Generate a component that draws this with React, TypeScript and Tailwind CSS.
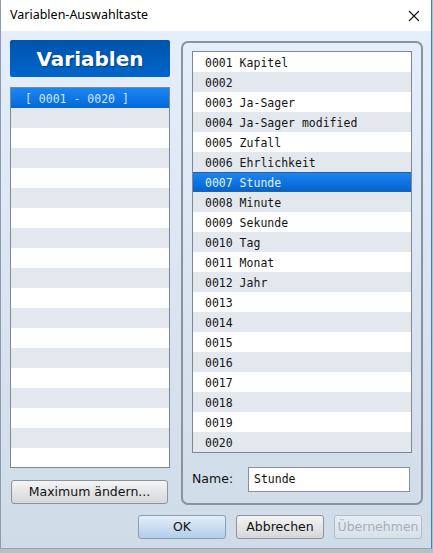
import React from 'react';

const vars = [
  'Kapitel',
  '',
  'Ja-Sager',
  'Ja-Sager modified',
  'Zufall',
  'Ehrlichkeit',
  'Stunde',
  'Minute',
  'Sekunde',
  'Tag',
  'Monat',
  'Jahr',
  '',
  '',
  '',
  '',
  '',
  '',
  '',
  '',
];

const mono = { fontFamily: '"DejaVu Sans Mono", monospace' };
const ui = { fontFamily: '"DejaVu Sans", sans-serif' };

function Row({ i, selected, children }: { i: number; selected?: boolean; children?: React.ReactNode }) {
  if (selected) {
    return (
      <div className="h-[20px] flex items-center pt-[4px] pl-[12px] text-[11.5px] text-[#e6f0ff] bg-gradient-to-b from-[#1c84ee] to-[#0264d4] border-y border-[#2e5f95]">
        {children}
      </div>
    );
  }
  return (
    <div
      className={
        'h-[20px] flex items-center pt-[4px] pl-[12px] text-[11.5px] text-[#141414] ' +
        (i % 2 === 1 ? 'bg-[#e3e8ee]' : 'bg-white')
      }
    >
      {children}
    </div>
  );
}

function Button({ children, primary, disabled, className }: any) {
  const look = disabled
    ? 'border-[#b4bcc4] text-[#a7afb8] bg-gradient-to-b from-[#e4ecf4] to-[#d8e0e8]'
    : primary
    ? 'border-[#8a9eb4] text-[#111] bg-gradient-to-b from-[#e3eef9] to-[#b3cde8]'
    : 'border-[#8e9399] text-[#111] bg-gradient-to-b from-[#f4f4f4] to-[#d5d7da]';
  return (
    <div
      className={
        'h-[24px] flex items-center justify-center rounded-[3px] border text-[12.5px] ' + look + ' ' + (className || '')
      }
      style={ui}
    >
      {children}
    </div>
  );
}

export default function App() {
  return (
    <div className="w-[433px] h-[553px] bg-[#b9bec4] overflow-hidden">
      <div className="w-[432px] h-[549px] flex flex-col border-l border-r border-b border-l-[#8d9bab] border-r-[#3f7fbd] border-b-[#9aa4ae]">
        {/* title bar */}
        <div className="h-[31px] bg-white flex items-center justify-between pl-[9px] pr-[10px] shrink-0">
          <span className="text-[12.5px] text-black" style={{ fontFamily: '"Noto Sans", sans-serif' }}>
            Variablen-Auswahltaste
          </span>
          <svg width="12" height="12" viewBox="0 0 12 12" className="mr-[1px]">
            <path d="M1 1 L11 11 M11 1 L1 11" stroke="#111" strokeWidth="1.1" />
          </svg>
        </div>

        {/* client */}
        <div className="flex-1 bg-gradient-to-b from-[#e5effb] to-[#cfdbe7] flex flex-col pl-[9px] pr-[8px]">
          <div className="flex gap-[11px] pt-[9px]">
            {/* left column */}
            <div className="w-[160px] flex flex-col">
              <div className="h-[37px] rounded-[2px] bg-gradient-to-b from-[#0054ab] to-[#0066cc] flex items-center justify-center">
                <span
                  className="text-white font-bold text-[20px] [text-shadow:1px_1px_1px_rgba(0,0,0,0.35)]"
                  style={ui}
                >
                  Variablen
                </span>
              </div>
              <div className="mt-[10px] h-[381px] border border-[#7f8790] overflow-hidden" style={mono}>
                {Array.from({ length: 19 }).map((_, i) =>
                  i === 0 ? (
                    <div
                      key={i}
                      className="h-[20px] flex items-center pt-[3px] pl-[14px] text-[11.5px] text-[#d4e6ff] bg-gradient-to-b from-[#1a86f4] to-[#0368d8]"
                    >
                      [ 0001 - 0020 ]
                    </div>
                  ) : (
                    <Row key={i} i={i} />
                  )
                )}
              </div>
              <Button className="mt-[12px] ml-[1px] w-[157px]">Maximum ändern...</Button>
            </div>

            {/* right group */}
            <div className="mt-[1px] w-[242px] h-[464px] border-2 border-[#8b929b] rounded-[7px] pt-[8px] pl-[9px] flex flex-col">
              <div className="w-[220px] border border-[#7f8790] bg-white" style={mono}>
                {vars.map((name, i) => (
                  <Row key={i} i={i} selected={i === 6}>
                    {String(i + 1).padStart(4, '0') + (name ? ' ' + name : '')}
                  </Row>
                ))}
              </div>
              <div className="mt-[14px] flex items-center">
                <span className="w-[56px] text-[12.5px] text-[#111]" style={ui}>
                  Name:
                </span>
                <div className="w-[162px] h-[25px] bg-white border border-[#8a9098] flex items-center pt-[1px] pl-[5px] text-[11.5px] text-[#111]" style={mono}>
                  Stunde
                </div>
              </div>
            </div>
          </div>

          {/* bottom buttons */}
          <div className="mt-[10px] flex justify-end gap-[10px] pr-[1px]">
            <Button primary className="w-[88px]">OK</Button>
            <Button className="w-[88px]">Abbrechen</Button>
            <Button disabled className="w-[88px]">Übernehmen</Button>
          </div>
        </div>
      </div>
    </div>
  );
}
